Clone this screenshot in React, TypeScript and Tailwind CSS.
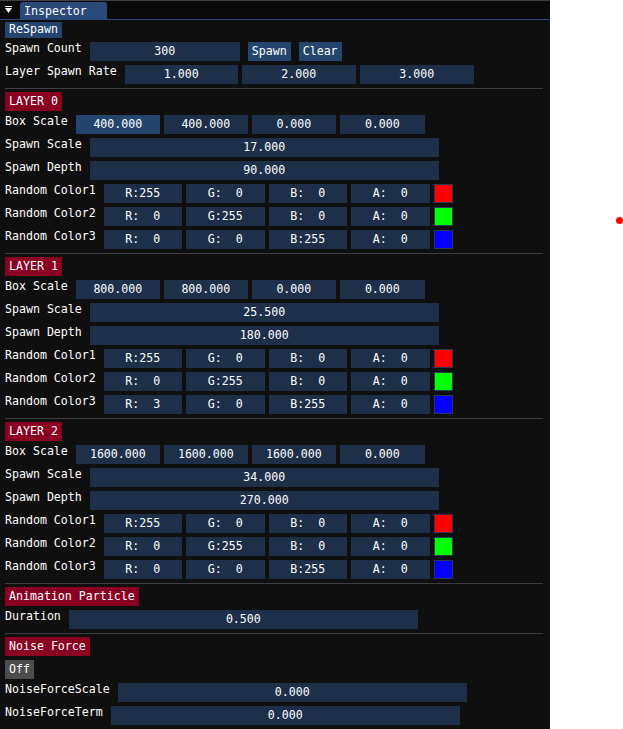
import React from 'react';

const FONT = { fontFamily: '"DejaVu Sans Mono", "Liberation Mono", monospace' };

function Field({ value, w, active }: { value: string; w: string; active?: boolean }) {
  return (
    <div
      className={`${w} h-[19px] shrink-0 flex items-center justify-center whitespace-pre ${
        active ? 'bg-[#24456d]' : 'bg-[#1d2f49]'
      }`}
    >
      {value}
    </div>
  );
}

function Label({ text }: { text: string }) {
  return <div className="shrink-0 leading-[13px] whitespace-pre mr-[8px]">{text}</div>;
}

function Row({ label, children }: { label: string; children: React.ReactNode }) {
  return (
    <div className="flex items-start h-[19px]">
      <Label text={label} />
      <div className="flex gap-[4px]">{children}</div>
    </div>
  );
}

function Header({ text }: { text: string }) {
  return (
    <div className="flex">
      <div className="h-[19px] px-[4px] flex items-center bg-[#8a0021] whitespace-pre">{text}</div>
    </div>
  );
}

function Separator() {
  return <div className="h-px bg-[#3d3d42] -mb-px w-[538px]" />;
}

function ColorRow({ label, rgba, swatch }: { label: string; rgba: string[]; swatch: string }) {
  return (
    <Row label={label}>
      <Field value={rgba[0]} w="w-[78px]" />
      <Field value={rgba[1]} w="w-[79px]" />
      <Field value={rgba[2]} w="w-[78px]" />
      <Field value={rgba[3]} w="w-[79px]" />
      <div className={`w-[19px] h-[19px] border border-[#2c3956] ${swatch}`} />
    </Row>
  );
}

const layers = [
  {
    name: 'LAYER 0',
    box: ['400.000', '400.000', '0.000', '0.000'],
    scale: '17.000',
    depth: '90.000',
    c: [
      ['R:255', 'G:  0', 'B:  0', 'A:  0'],
      ['R:  0', 'G:255', 'B:  0', 'A:  0'],
      ['R:  0', 'G:  0', 'B:255', 'A:  0'],
    ],
    activeFirst: true,
  },
  {
    name: 'LAYER 1',
    box: ['800.000', '800.000', '0.000', '0.000'],
    scale: '25.500',
    depth: '180.000',
    c: [
      ['R:255', 'G:  0', 'B:  0', 'A:  0'],
      ['R:  0', 'G:255', 'B:  0', 'A:  0'],
      ['R:  3', 'G:  0', 'B:255', 'A:  0'],
    ],
    activeFirst: false,
  },
  {
    name: 'LAYER 2',
    box: ['1600.000', '1600.000', '1600.000', '0.000'],
    scale: '34.000',
    depth: '270.000',
    c: [
      ['R:255', 'G:  0', 'B:  0', 'A:  0'],
      ['R:  0', 'G:255', 'B:  0', 'A:  0'],
      ['R:  0', 'G:  0', 'B:255', 'A:  0'],
    ],
    activeFirst: false,
  },
];

const swatches = ['bg-[#ff0000]', 'bg-[#00ff00]', 'bg-[#0000ff]'];

export default function App() {
  return (
    <div className="relative w-[623px] h-[729px] bg-white overflow-hidden text-white text-[11.6px]" style={FONT}>
      <div className="w-[550px] h-[729px] bg-[#0f0f0f] flex flex-col">
        {/* Title bar */}
        <div className="h-[19px] shrink-0 bg-[#0a0a0a] border-t border-[#3e3e47] flex items-end">
          <svg width="20" height="18" viewBox="0 0 20 18" className="shrink-0">
            <rect x="5" y="5" width="7" height="1" fill="#ffffff" />
            <polygon points="5,7 12,7 8.5,12" fill="#ffffff" />
          </svg>
          <div className="h-[17px] w-[87px] bg-[#294a7a] rounded-t-[3px] pl-[4px] pt-px flex items-center leading-[13px]">
            Inspector
          </div>
        </div>
        <div className="h-px shrink-0 bg-[#294a7a]" />

        {/* Content */}
        <div className="flex flex-col gap-[4px] px-[5px] pt-[2px]">
          <div className="flex">
            <div className="h-[16px] px-[4px] flex items-center bg-[#24456d]">ReSpawn</div>
          </div>
          <div className="flex items-start h-[19px]">
            <Label text="Spawn Count" />
            <Field value="300" w="w-[150px]" />
            <div className="h-[19px] px-[4px] ml-[8px] flex items-center bg-[#24456d]">Spawn</div>
            <div className="h-[19px] px-[4px] ml-[8px] flex items-center bg-[#24456d]">Clear</div>
          </div>
          <Row label="Layer Spawn Rate">
            <Field value="1.000" w="w-[113px]" />
            <Field value="2.000" w="w-[114px]" />
            <Field value="3.000" w="w-[114px]" />
          </Row>

          {layers.map((l) => (
            <React.Fragment key={l.name}>
              <Separator />
              <Header text={l.name} />
              <Row label="Box Scale">
                <Field value={l.box[0]} w="w-[84px]" active={l.activeFirst} />
                <Field value={l.box[1]} w="w-[84px]" />
                <Field value={l.box[2]} w="w-[84px]" />
                <Field value={l.box[3]} w="w-[85px]" />
              </Row>
              <Row label="Spawn Scale">
                <Field value={l.scale} w="w-[349px]" />
              </Row>
              <Row label="Spawn Depth">
                <Field value={l.depth} w="w-[349px]" />
              </Row>
              {l.c.map((rgba, i) => (
                <ColorRow key={i} label={`Random Color${i + 1}`} rgba={rgba} swatch={swatches[i]} />
              ))}
            </React.Fragment>
          ))}

          <Separator />
          <Header text="Animation Particle" />
          <Row label="Duration">
            <Field value="0.500" w="w-[349px]" />
          </Row>

          <Separator />
          <Header text="Noise Force" />
          <div className="flex">
            <div className="h-[19px] px-[4px] flex items-center bg-[#4d4d4d]">Off</div>
          </div>
          <Row label="NoiseForceScale">
            <Field value="0.000" w="w-[349px]" />
          </Row>
          <Row label="NoiseForceTerm">
            <Field value="0.000" w="w-[349px]" />
          </Row>
          <Separator />
        </div>
      </div>

      <div className="absolute left-[616px] top-[217px] w-[7px] h-[7px] rounded-full bg-[#ff0000]" />
    </div>
  );
}
